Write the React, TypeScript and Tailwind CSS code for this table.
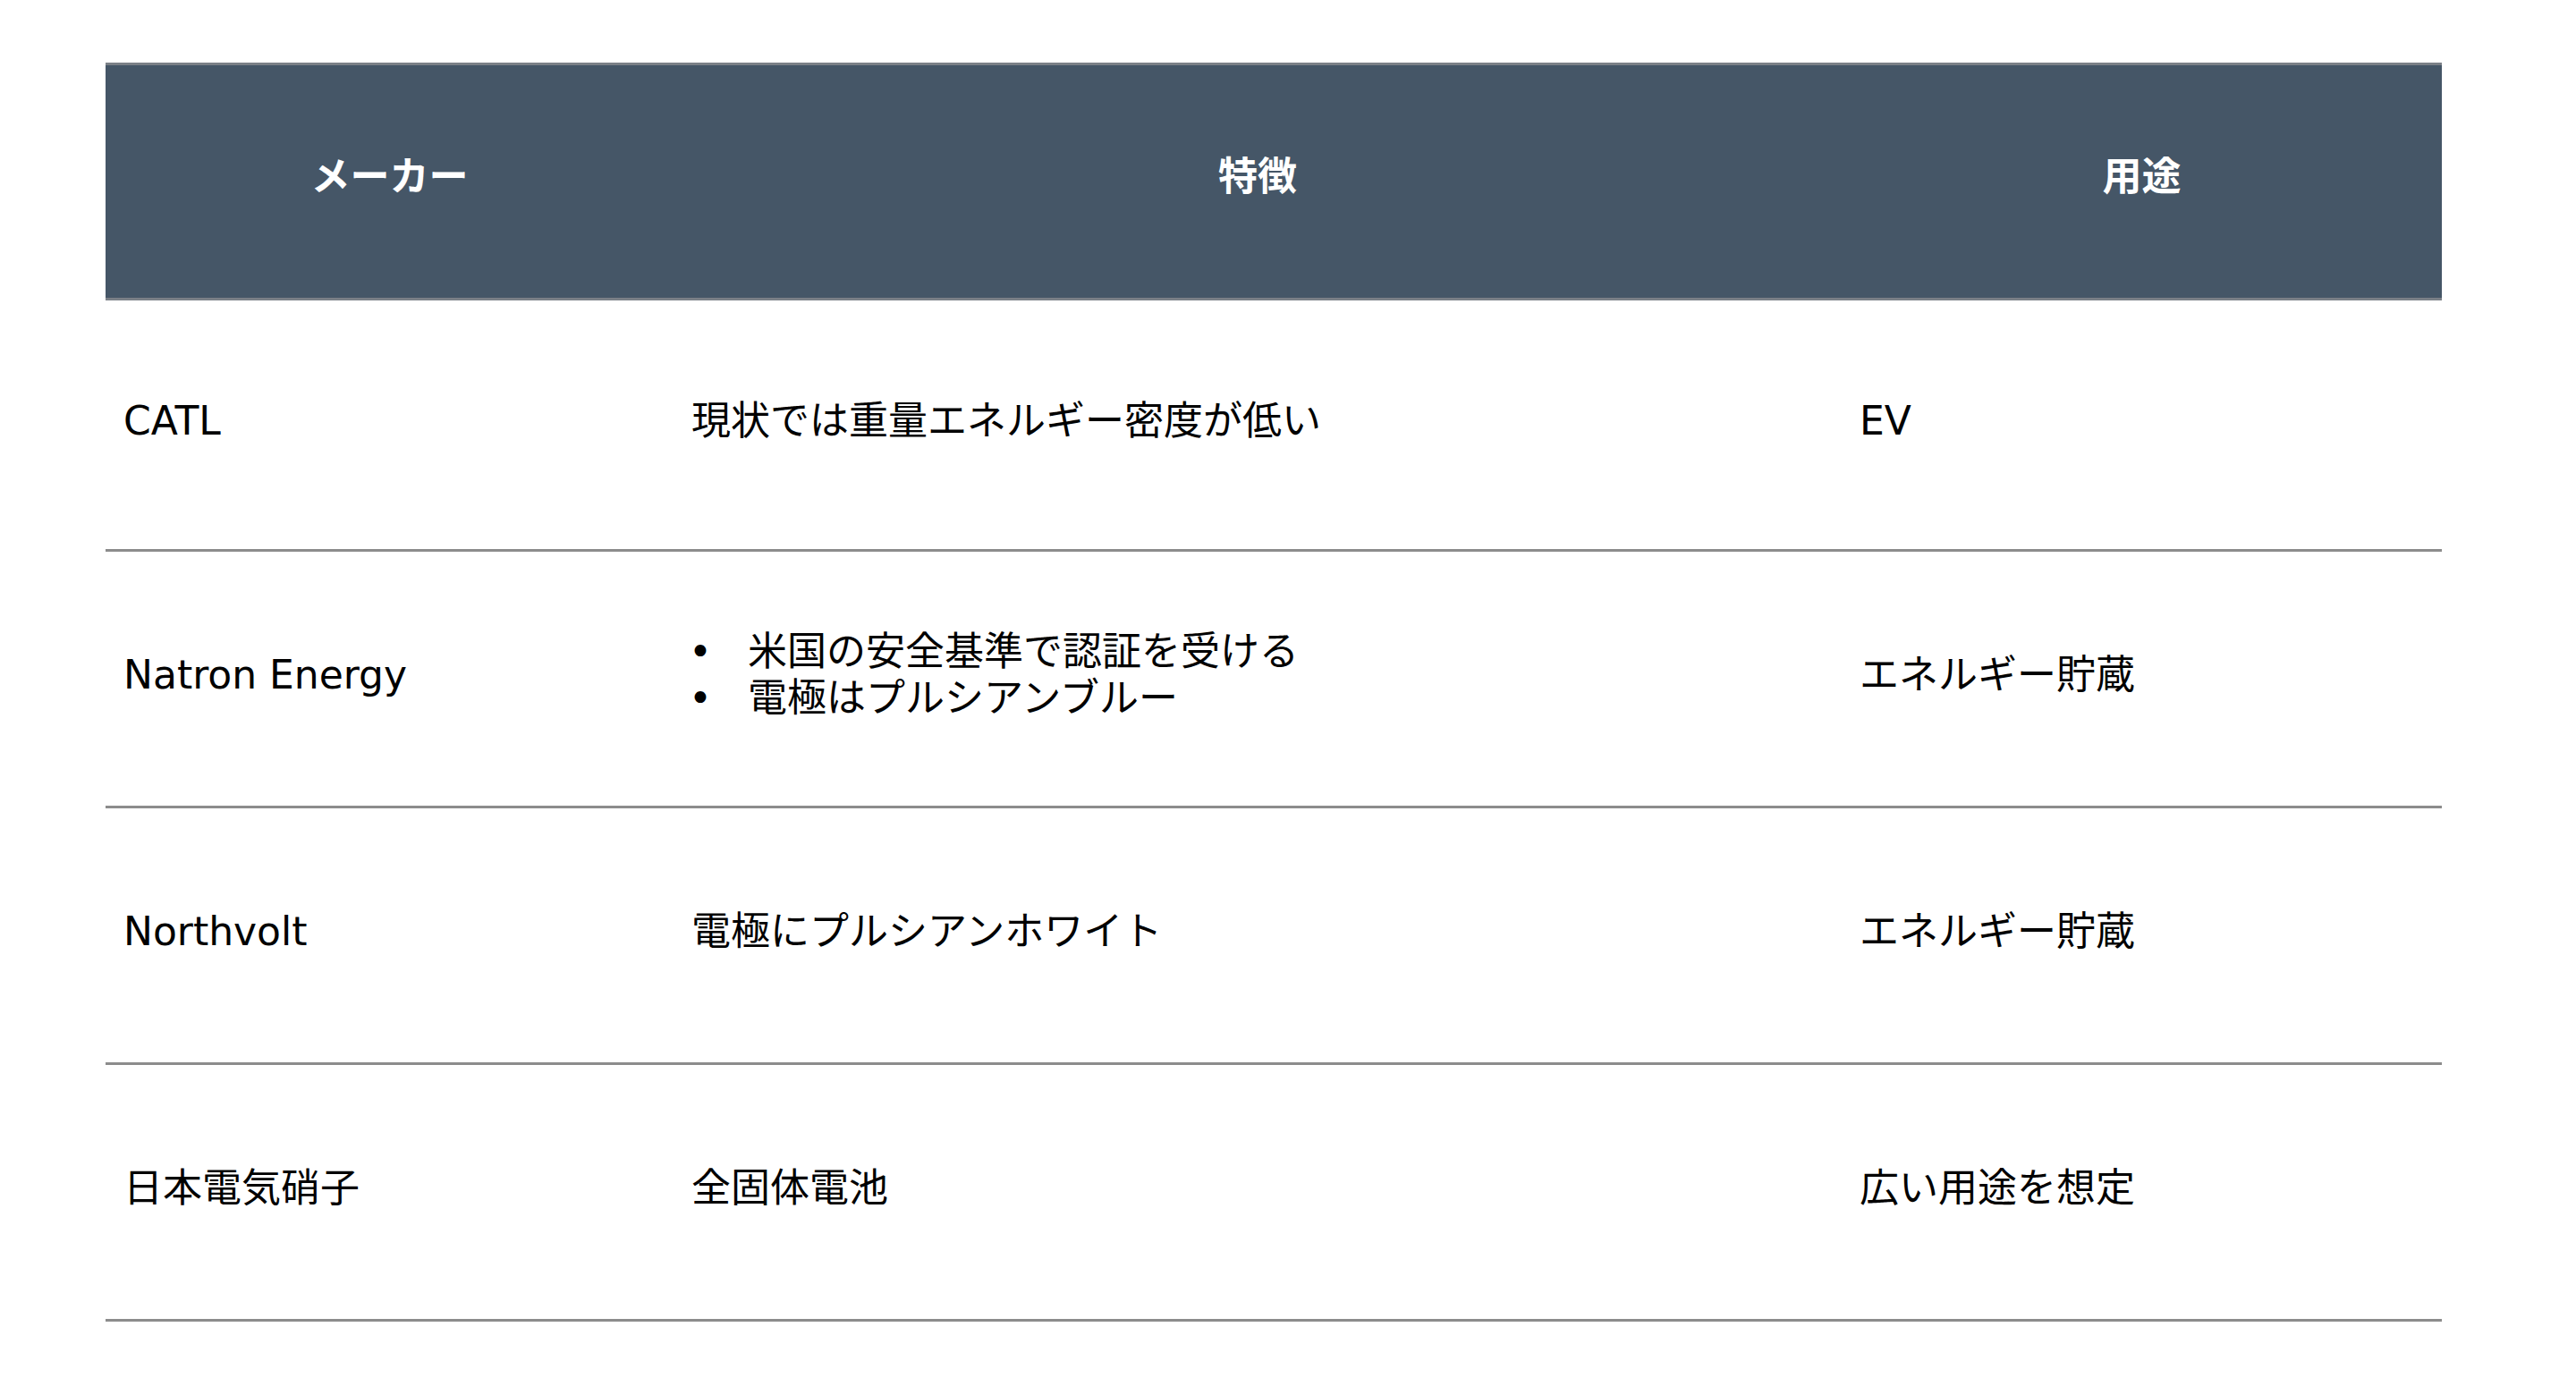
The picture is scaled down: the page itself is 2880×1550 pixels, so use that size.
const rows = [
  { maker: "CATL", features: ["現状では重量エネルギー密度が低い"], use: "EV", bullets: false },
  {
    maker: "Natron Energy",
    features: ["米国の安全基準で認証を受ける", "電極はプルシアンブルー"],
    use: "エネルギー貯蔵",
    bullets: true,
  },
  { maker: "Northvolt", features: ["電極にプルシアンホワイト"], use: "エネルギー貯蔵", bullets: false },
  { maker: "日本電気硝子", features: ["全固体電池"], use: "広い用途を想定", bullets: false },
];

const cols = "grid grid-cols-[635px_1306px_671px]";

export default function App() {
  return (
    <div
      className="min-h-screen w-full bg-white pt-[70px] pl-[118px] text-black"
      style={{ fontFamily: '"DejaVu Sans", "Noto Sans CJK JP", sans-serif' }}
    >
      <div className="w-[2612px]">
        {/* header */}
        <div className={`${cols} h-[266px] bg-[#455667] border-y-[3px] border-[#7b8087] text-white`}>
          {["メーカー", "特徴", "用途"].map((h) => (
            <div key={h} className="flex items-center justify-center pb-[10px] text-[44px] font-bold">
              {h}
            </div>
          ))}
        </div>

        {rows.map((row, i) => (
          <div
            key={row.maker}
            className={`${cols} ${i === 0 ? "h-[281px]" : "h-[287px]"} border-b-[3px] border-[#8c8c8c] text-[44px]`}
          >
            <div className="flex items-center pl-[20px] pb-[8px]">{row.maker}</div>
            <div className="flex items-center pl-[20px] pb-[8px]">
              {row.bullets ? (
                <ul className="leading-[52px]">
                  {row.features.map((f) => (
                    <li key={f} className="flex">
                      <span className="-ml-[3px] w-[66px]">•</span>
                      <span>{f}</span>
                    </li>
                  ))}
                </ul>
              ) : (
                <span>{row.features[0]}</span>
              )}
            </div>
            <div className="flex items-center pl-[20px] pb-[8px]">{row.use}</div>
          </div>
        ))}
      </div>
    </div>
  );
}
